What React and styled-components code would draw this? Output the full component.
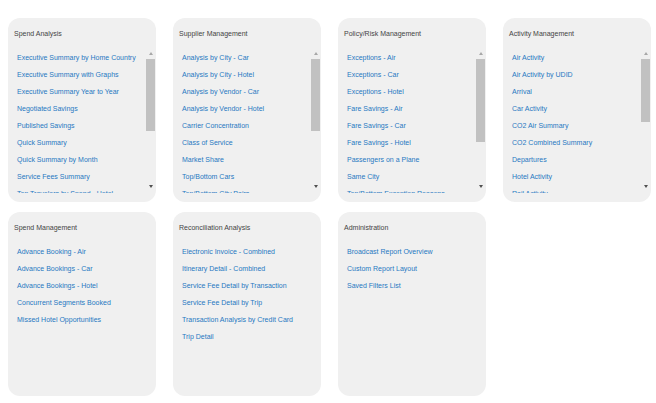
import React from 'react'
import styled, { createGlobalStyle } from 'styled-components'

const GlobalStyle = createGlobalStyle`
  html, body {
    margin: 0;
    padding: 0;
    background: #ffffff;
    font-family: "Liberation Sans", Arial, sans-serif;
  }
`

const Page = styled.div`
  display: grid;
  grid-template-columns: repeat(4, 148px);
  grid-auto-rows: 184px;
  column-gap: 17px;
  row-gap: 10px;
  padding: 18px 0 0 8px;
`

const Card = styled.div`
  background: #f0f0f0;
  border-radius: 12px;
  padding: 12px 1px 8px 6px;
  display: flex;
  flex-direction: column;
  box-sizing: border-box;
  overflow: hidden;
`

const Title = styled.div`
  font-size: 7px;
  line-height: 8px;
  color: #444444;
  height: 8px;
  white-space: nowrap;
`

const ListArea = styled.div`
  margin-top: 11px;
  height: 144px;
  display: flex;
`

const List = styled.ul`
  list-style: none;
  margin: 0;
  padding: 0 0 0 3px;
  flex: 1;
  overflow: hidden;
`

const Item = styled.li`
  font-size: 7px;
  line-height: 17px;
  height: 17px;
  white-space: nowrap;
`

const Link = styled.a`
  color: #2778c2;
  text-decoration: none;
`

const Scrollbar = styled.div`
  width: 9px;
  height: 142px;
  display: flex;
  flex-direction: column;
  background: #f0f0f0;
`

const ArrowButton = styled.div`
  height: 9px;
  display: flex;
  align-items: center;
  justify-content: center;

  &::before {
    content: '';
    width: 0;
    height: 0;
    border-left: 2.5px solid transparent;
    border-right: 2.5px solid transparent;
    ${p => p.$up
      ? 'border-bottom: 3px solid #a8a8a8;'
      : 'border-top: 3px solid #505050;'}
  }
`

const Track = styled.div`
  flex: 1;
  display: flex;
  flex-direction: column;
`

const Thumb = styled.div`
  height: ${p => p.$size}px;
  background: #c1c1c1;
  margin: 1px 0 0 0;
`

const groups = [
  {
    title: 'Spend Analysis',
    thumb: 72,
    items: [
      'Executive Summary by Home Country',
      'Executive Summary with Graphs',
      'Executive Summary Year to Year',
      'Negotiated Savings',
      'Published Savings',
      'Quick Summary',
      'Quick Summary by Month',
      'Service Fees Summary',
      'Top Travelers by Spend - Hotel',
    ],
  },
  {
    title: 'Supplier Management',
    thumb: 72,
    items: [
      'Analysis by City - Car',
      'Analysis by City - Hotel',
      'Analysis by Vendor - Car',
      'Analysis by Vendor - Hotel',
      'Carrier Concentration',
      'Class of Service',
      'Market Share',
      'Top/Bottom Cars',
      'Top/Bottom City Pairs',
    ],
  },
  {
    title: 'Policy/Risk Management',
    thumb: 83,
    items: [
      'Exceptions - Air',
      'Exceptions - Car',
      'Exceptions - Hotel',
      'Fare Savings - Air',
      'Fare Savings - Car',
      'Fare Savings - Hotel',
      'Passengers on a Plane',
      'Same City',
      'Top/Bottom Exception Reasons',
    ],
  },
  {
    title: 'Activity Management',
    thumb: 63,
    items: [
      'Air Activity',
      'Air Activity by UDID',
      'Arrival',
      'Car Activity',
      'CO2 Air Summary',
      'CO2 Combined Summary',
      'Departures',
      'Hotel Activity',
      'Rail Activity',
    ],
  },
  {
    title: 'Spend Management',
    items: [
      'Advance Booking - Air',
      'Advance Bookings - Car',
      'Advance Bookings - Hotel',
      'Concurrent Segments Booked',
      'Missed Hotel Opportunities',
    ],
  },
  {
    title: 'Reconciliation Analysis',
    items: [
      'Electronic Invoice - Combined',
      'Itinerary Detail - Combined',
      'Service Fee Detail by Transaction',
      'Service Fee Detail by Trip',
      'Transaction Analysis by Credit Card',
      'Trip Detail',
    ],
  },
  {
    title: 'Administration',
    items: [
      'Broadcast Report Overview',
      'Custom Report Layout',
      'Saved Filters List',
    ],
  },
]

const ReportGroup = ({ group }) => (
  <Card>
    <Title>{group.title}</Title>
    <ListArea>
      <List>
        {group.items.map(name => (
          <Item key={name}>
            <Link href="#">{name}</Link>
          </Item>
        ))}
      </List>
      {group.thumb && (
        <Scrollbar>
          <ArrowButton $up />
          <Track>
            <Thumb $size={group.thumb} />
          </Track>
          <ArrowButton />
        </Scrollbar>
      )}
    </ListArea>
  </Card>
)

const App = () => {
  return (
    <>
      <GlobalStyle />
      <Page>
        {groups.map(g => (
          <ReportGroup key={g.title} group={g} />
        ))}
      </Page>
    </>
  )
}

export default App
